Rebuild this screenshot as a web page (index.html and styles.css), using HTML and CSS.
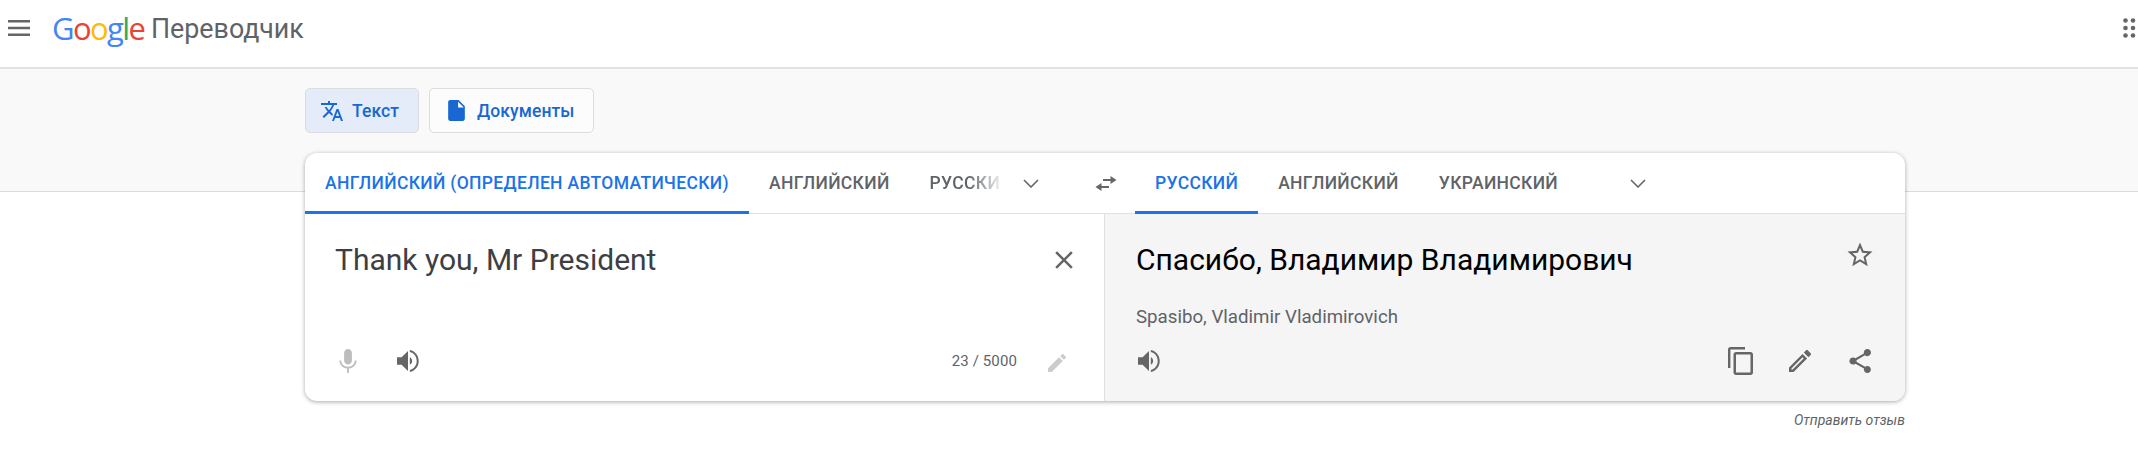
FILE: index.html
```html
<!DOCTYPE html>
<html lang="ru">
<head>
<meta charset="utf-8">
<title>Google Переводчик</title>
<link rel="stylesheet" href="styles.css">
</head>
<body>
<header class="top">
  <svg class="menu" viewBox="0 0 22 16"><path d="M0 0h22v2.600H0zM0 6.700h22v2.600H0zM0 13.400h22V16H0z"/></svg>
  <div class="logo"><span class="b">G</span><span class="r">o</span><span class="y">o</span><span class="b">g</span><span class="g">l</span><span class="r">e</span></div>
  <div class="product">Переводчик</div>
  <svg class="apps" viewBox="0 0 15 20"><circle cx="2.500" cy="2.500" r="2.300"/><circle cx="10" cy="2.500" r="2.300"/><circle cx="2.500" cy="10" r="2.300"/><circle cx="10" cy="10" r="2.300"/><circle cx="2.500" cy="17.500" r="2.300"/><circle cx="10" cy="17.500" r="2.300"/></svg>
</header>
<section class="band">
  <button class="mode active">
    <svg class="mode-ico" viewBox="0 0 24 24"><path d="M12.870 15.070l-2.540-2.510.03-.03A17.520 17.520 0 0 0 14.070 6H17V4h-7V2H8v2H1v1.990h11.170C11.500 7.920 10.440 9.750 9 11.350 8.070 10.320 7.300 9.190 6.690 8h-2c.73 1.630 1.730 3.170 2.980 4.560l-5.090 5.020L4 19l5-5 3.110 3.110.76-2.040zM18.500 10h-2L12 22h2l1.120-3h4.750L21 22h2l-4.500-12zm-2.620 7l1.620-4.330L19.120 17h-3.240z"/></svg>
    <span>Текст</span>
  </button>
  <button class="mode">
    <svg class="mode-ico doc" viewBox="0 0 24 24"><path d="M14 2H6c-1.100 0-2 .9-2 2v16c0 1.100.9 2 2 2h12c1.100 0 2-.9 2-2V8l-6-6zm-.5 7V3.500L19 9h-5.500z"/></svg>
    <span>Документы</span>
  </button>
</section>
<main class="card">
  <div class="tabs">
    <div class="tabs-src">
      <div class="tab on">АНГЛИЙСКИЙ (ОПРЕДЕЛЕН АВТОМАТИЧЕСКИ)</div>
      <div class="tab">АНГЛИЙСКИЙ</div>
      <div class="tab cut">РУССКИ</div>
      <svg class="chev" viewBox="0 0 16 9"><path d="M1 1l7 7 7-7" fill="none" stroke-width="1.600"/></svg>
    </div>
    <svg class="swap" viewBox="0 0 22 15"><path d="M15.500 0l6 4-6 4V5H8V3h7.500zM6.500 7v3H14v2H6.500v3l-6-4z"/></svg>
    <div class="tabs-dst">
      <div class="tab on">РУССКИЙ</div>
      <div class="tab">АНГЛИЙСКИЙ</div>
      <div class="tab">УКРАИНСКИЙ</div>
      <svg class="chev chev-dst" viewBox="0 0 16 9"><path d="M1 1l7 7 7-7" fill="none" stroke-width="1.600"/></svg>
    </div>
  </div>
  <div class="panes">
    <div class="pane src">
      <div class="text-row">
        <div class="text src-text">Thank you, Mr President</div>
        <svg class="clear" viewBox="0 0 24 24"><path d="M19 6.410L17.590 5 12 10.590 6.410 5 5 6.410 10.590 12 5 17.590 6.410 19 12 13.410 17.590 19 19 17.590 13.410 12z"/></svg>
      </div>
      <div class="tools">
        <svg class="mic" viewBox="0 0 18 24"><path d="M9 15.500c2.200 0 3.900-1.800 3.900-4V3.900C12.900 1.800 11.200 0 9 0S5.100 1.800 5.100 3.900v7.600c0 2.200 1.700 4 3.900 4z"/><path d="M15.800 11.500c0 3.700-3 6.200-6.800 6.200s-6.800-2.500-6.800-6.200H.4c0 4.200 3.400 7.500 7.700 8.100V24h1.800v-4.400c4.300-.6 7.700-3.900 7.700-8.100h-1.800z"/></svg>
        <svg class="spk" viewBox="0 0 24 24"><path d="M0 8v8h5l7 7V1L5 8H0zm16.500 4c0-1.800-1-3.300-2.500-4v8c1.500-.7 2.500-2.200 2.500-4z"/><path d="M14 0v2.300c4.300.9 7.500 4.800 7.500 9.700s-3.200 8.800-7.500 9.700V24c5.500-1 9.700-6 9.700-12S19.500 1 14 0z"/></svg>
        <div class="count">23 / 5000</div>
        <svg class="pen-off" viewBox="0 0 18 18"><path d="M0 14.250V18h3.750L14.810 6.940l-3.750-3.750L0 14.250zM17.710 4.040c.39-.39.390-1.020 0-1.410L15.370.290c-.39-.39-1.020-.39-1.410 0l-1.830 1.830 3.750 3.750 1.830-1.830z"/></svg>
      </div>
    </div>
    <div class="pane dst">
      <div class="text-row">
        <div class="text dst-text">Спасибо, Владимир Владимирович</div>
        <svg class="star" viewBox="0 0 24 24"><path d="M22 9.240l-7.190-.62L12 2 9.190 8.630 2 9.240l5.460 4.730L5.820 21 12 17.270 18.180 21l-1.630-7.030L22 9.240zM12 15.400l-3.760 2.270 1-4.280-3.320-2.880 4.380-.38L12 6.100l1.710 4.040 4.380.38-3.320 2.880 1 4.280L12 15.400z"/></svg>
      </div>
      <div class="roman">Spasibo, Vladimir Vladimirovich</div>
      <div class="tools">
        <svg class="spk" viewBox="0 0 24 24"><path d="M0 8v8h5l7 7V1L5 8H0zm16.500 4c0-1.800-1-3.300-2.500-4v8c1.500-.7 2.500-2.200 2.500-4z"/><path d="M14 0v2.300c4.300.9 7.500 4.800 7.500 9.700s-3.200 8.800-7.500 9.700V24c5.500-1 9.700-6 9.700-12S19.500 1 14 0z"/></svg>
        <svg class="copy" viewBox="0 0 25 28"><path d="M17 0H2.500C1.100 0 0 1.100 0 2.500V21h2.400V2.400H17V0zm5.500 5H8C6.600 5 5.500 6.100 5.500 7.500v18C5.500 26.900 6.600 28 8 28h14.500c1.400 0 2.500-1.100 2.500-2.500v-18C25 6.100 23.900 5 22.500 5zm0 20.600H8V7.400h14.500v18.200z"/></svg>
        <svg class="pen" viewBox="3 3 18 18"><path d="M14.060 9.020l.92.92L5.920 19H5v-.92l9.060-9.060M17.660 3c-.25 0-.51.100-.7.290l-1.830 1.830 3.750 3.750 1.830-1.830c.39-.39.390-1.020 0-1.410l-2.340-2.340c-.2-.2-.45-.29-.71-.29zm-3.600 3.190L3 17.250V21h3.750L17.810 9.940l-3.750-3.750z"/></svg>
        <svg class="share" viewBox="3 2 18 20"><path d="M18 16.080c-.76 0-1.440.3-1.960.77L8.910 12.700c.05-.23.09-.46.09-.7s-.04-.47-.09-.7l7.050-4.110c.54.5 1.250.81 2.040.81 1.660 0 3-1.340 3-3s-1.340-3-3-3-3 1.340-3 3c0 .24.04.47.09.7L8.040 9.810C7.500 9.310 6.790 9 6 9c-1.660 0-3 1.340-3 3s1.340 3 3 3c.79 0 1.500-.31 2.040-.81l7.120 4.160c-.05.21-.08.43-.08.65 0 1.610 1.310 2.920 2.920 2.920s2.920-1.310 2.920-2.920-1.310-2.920-2.920-2.920z"/></svg>
      </div>
    </div>
  </div>
</main>
<div class="feedback">Отправить отзыв</div>
</body>
</html>
```
FILE: styles.css
```css
* { box-sizing: border-box; }
html, body { margin: 0; padding: 0; background: #fff; }
body { width: 2138px; height: 461px; overflow: hidden; font-family: Roboto, "Liberation Sans", sans-serif; color: #5f6368; }
svg { display: block; flex: none; fill: #666; }

.top { height: 69px; display: flex; align-items: center; border-bottom: 2px solid #e2e2e2; padding-left: 8px; }
.menu { width: 22px; height: 16px; margin-top: -12px; }
.logo { margin-left: 22px; width: 99px; font: 500 31px/1 "Open Sans", sans-serif; letter-spacing: -1.600px; margin-top: -11px; }
.b { color: #4285f4; } .r { color: #ea4335; } .y { color: #fbbc05; } .g { color: #34a853; }
.product { font-size: 26.800px; line-height: 34px; margin-top: -10px; color: #5f6368; }
.apps { width: 15px; height: 20px; margin-left: auto; margin-top: -12px; }

.band { height: 123px; background: #f9f9f9; border-bottom: 1px solid #dadce0; padding: 19px 0 0 305px; display: flex; gap: 10px; align-items: flex-start; }
.mode { height: 45px; display: flex; align-items: center; padding: 0 0 0 14px; gap: 8px; font: 500 17.500px Roboto, sans-serif; color: #1967d2; background: #fcfcfc; border: 1px solid #dadce0; border-radius: 5px; letter-spacing: .1px; }
.mode.active { background: #e3ecf8; width: 114px; }
.mode:not(.active) { width: 165px; gap: 8px; }
.mode-ico { width: 24px; height: 24px; fill: #1967d2; }
.doc { width: 25px; height: 25px; }

.card { width: 1600px; height: 248px; margin: -39px 0 0 305px; position: relative; background: #fff; border-radius: 12px; box-shadow: 0 1px 4px rgba(60,64,67,.45); overflow: hidden; display: flex; flex-direction: column; }
.tabs { height: 61px; display: flex; align-items: stretch; border-bottom: 1px solid #e0e0e0; }
.tabs-src { width: 770px; display: flex; align-items: stretch; }
.tabs-dst { flex: 1; display: flex; align-items: stretch; }
.tab { padding: 0 20px; font-size: 17.500px; letter-spacing: .33px; font-weight: 500; line-height: 60px; color: #5f6368; white-space: nowrap; border-bottom: 3px solid transparent; height: 61px; }
.tab.on { color: #1a73e8; border-bottom-color: #1a73e8; }
.cut { width: 90px; padding-right: 0; -webkit-mask-image: linear-gradient(90deg, #000 65%, rgba(0,0,0,.12) 100%); mask-image: linear-gradient(90deg, #000 65%, rgba(0,0,0,.12) 100%); }
.chev { width: 16px; height: 9px; align-self: center; margin-left: 23px; fill: none; stroke: #666; }
.chev-dst { margin-left: 52px; }
.swap { width: 22px; height: 15px; align-self: center; margin-left: 20px; margin-right: 18px; }

.panes { flex: 1; display: flex; }
.pane { position: relative; display: flex; flex-direction: column; }
.src { width: 799px; padding: 0 0 0 30px; }
.dst { flex: 1; background: #f5f5f5; border-left: 1px solid #e0e0e0; padding: 0 0 0 31px; }
.text-row { display: flex; justify-content: space-between; align-items: flex-start; height: 91px; padding-top: 26px; }
.text { font-size: 30px; line-height: 40px; }
.src-text { color: #3c4043; }
.dst-text { color: #000; }
.clear { width: 30px; height: 30px; margin-top: 5px; }
.src .clear { margin-right: 25px; }
.star { width: 30px; height: 30px; margin-right: 30px; margin-top: 0; }
.roman { font-size: 18.700px; line-height: 24px; color: #5f6368; }
.tools { display: flex; align-items: center; height: 28px; margin-top: auto; margin-bottom: 26px; }
.mic { width: 18px; height: 24px; fill: #bdbdbd; margin-left: 4px; }
.spk { width: 24px; height: 22px; }
.src .spk { margin-left: 39px; }
.dst .spk { margin-left: 1px; }
.count { font-size: 15px; letter-spacing: .12px; margin-left: auto; }
.pen-off { width: 18px; height: 18px; fill: #ccc; margin: 4px 38px 0 31px; }
.copy { width: 25px; height: 28px; margin-left: auto; }
.pen { width: 22px; height: 22px; margin-left: 36px; }
.share { width: 22.400px; height: 24px; margin: 0 34px 0 38px; }
.feedback { width: 1600px; margin: 11px 0 0 305px; text-align: right; font-size: 14px; font-style: italic; color: #5f6368; }
```
